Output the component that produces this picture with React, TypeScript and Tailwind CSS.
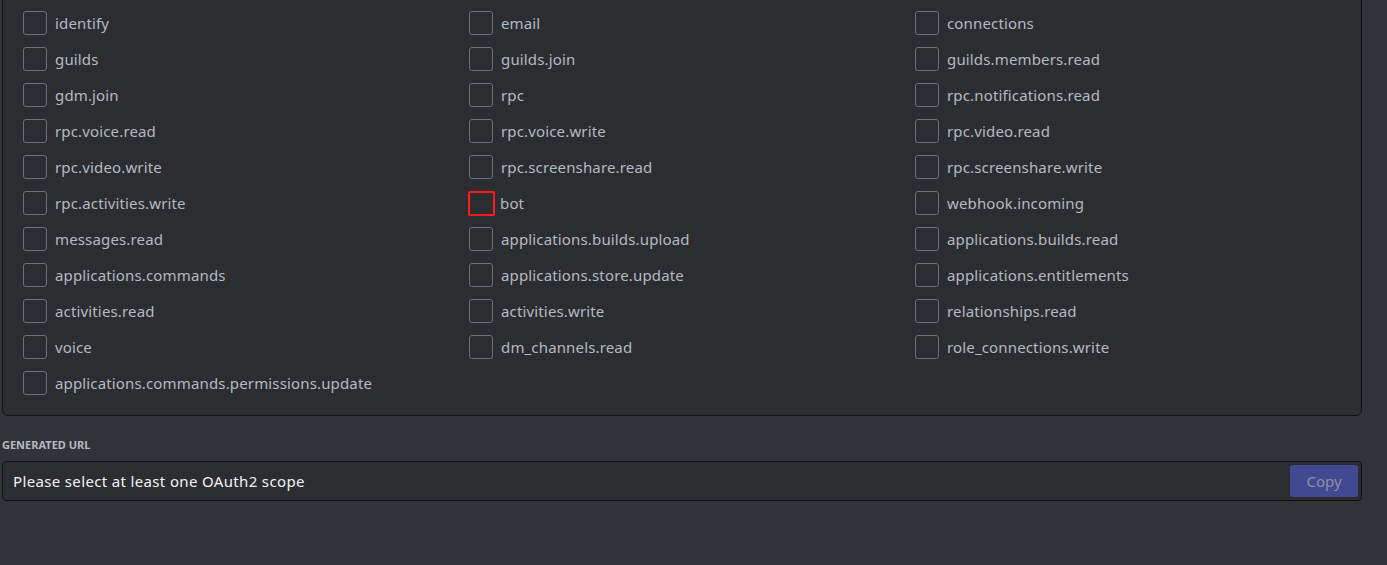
import React, { FC, useState } from 'react';

const scopes: string[] = [
  'identify',
  'email',
  'connections',
  'guilds',
  'guilds.join',
  'guilds.members.read',
  'gdm.join',
  'rpc',
  'rpc.notifications.read',
  'rpc.voice.read',
  'rpc.voice.write',
  'rpc.video.read',
  'rpc.video.write',
  'rpc.screenshare.read',
  'rpc.screenshare.write',
  'rpc.activities.write',
  'bot',
  'webhook.incoming',
  'messages.read',
  'applications.builds.upload',
  'applications.builds.read',
  'applications.commands',
  'applications.store.update',
  'applications.entitlements',
  'activities.read',
  'activities.write',
  'relationships.read',
  'voice',
  'dm_channels.read',
  'role_connections.write',
  'applications.commands.permissions.update',
];

interface ScopeProps {
  name: string;
  highlighted?: boolean;
}

const Scope: FC<ScopeProps> = ({ name, highlighted }) => {
  const [checked, setChecked] = useState<boolean>(false);

  return (
    <label className="flex items-center h-6 cursor-pointer" onClick={() => setChecked(!checked)}>
      {highlighted ? (
        <span className="w-[27px] h-[25px] -ml-px rounded-[2px] border-2 border-[#ff1a1a] mr-[5px]" />
      ) : (
        <span className="w-6 h-6 rounded-[3px] border border-[#6d7078] mr-2" />
      )}
      <span className="text-[15px] tracking-[0.15px] text-[#b5bac1]">{name}</span>
    </label>
  );
};

const App: FC = () => {
  return (
    <div
      className="w-[1387px] h-[565px] overflow-hidden bg-[#313338]"
      style={{ fontFamily: '"Noto Sans", "Open Sans", sans-serif' }}
    >
      <div className="ml-[2px] w-[1360px] -mt-[10px] rounded-md border border-[#0f1012] bg-[#2b2d31] pl-5 pt-5 pb-5">
        <div className="grid grid-cols-3 gap-y-3">
          {scopes.map((s) => (
            <Scope key={s} name={s} highlighted={s === 'bot'} />
          ))}
        </div>
      </div>
      <div className="ml-[2px] mt-[22px] text-[11px] font-bold uppercase text-[#b5bac1] leading-[13px]">
        Generated URL
      </div>
      <div className="ml-[2px] mt-[10px] w-[1360px] h-10 rounded-[4px] border border-[#0f1012] bg-[#2b2d31] flex items-center justify-between pl-[10px] pr-[3px]">
        <span className="text-[15px] tracking-[0.35px] text-[#f2f3f5]">Please select at least one OAuth2 scope</span>
        <button className="w-[68px] h-8 rounded-[3px] bg-[#414991] text-[15px] text-[#8e90a8]">
          Copy
        </button>
      </div>
    </div>
  );
};

export default App;
